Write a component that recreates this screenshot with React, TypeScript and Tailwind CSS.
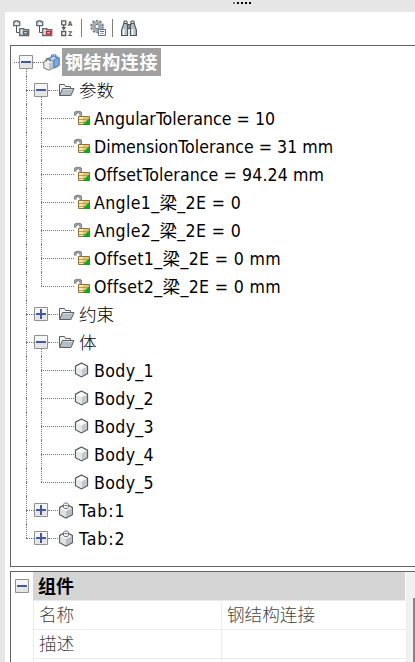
import type { ReactNode } from "react";
import clsx from "clsx";

type IconKind = "assembly" | "folder" | "param" | "body" | "tab";

interface TreeNode {
  label: string;
  icon: IconKind;
  textClass: string;
  open?: boolean;
  children?: TreeNode[];
}

const nodes: TreeNode[] = [
  {
    label: "参数",
    icon: "folder",
    textClass: "font-light",
    open: true,
    children: [
      { label: "AngularTolerance = 10", icon: "param", textClass: "tracking-[0.05px]" },
      { label: "DimensionTolerance = 31 mm", icon: "param", textClass: "tracking-[0.02px]" },
      { label: "OffsetTolerance = 94.24 mm", icon: "param", textClass: "tracking-[0.1px]" },
      { label: "Angle1_梁_2E = 0", icon: "param", textClass: "tracking-[0.34px]" },
      { label: "Angle2_梁_2E = 0", icon: "param", textClass: "tracking-[0.34px]" },
      { label: "Offset1_梁_2E = 0 mm", icon: "param", textClass: "tracking-[0.34px]" },
      { label: "Offset2_梁_2E = 0 mm", icon: "param", textClass: "tracking-[0.34px]" },
    ],
  },
  { label: "约束", icon: "folder", textClass: "font-light" },
  {
    label: "体",
    icon: "folder",
    textClass: "font-light",
    open: true,
    children: [
      { label: "Body_1", icon: "body", textClass: "tracking-[0.35px]" },
      { label: "Body_2", icon: "body", textClass: "tracking-[0.35px]" },
      { label: "Body_3", icon: "body", textClass: "tracking-[0.35px]" },
      { label: "Body_4", icon: "body", textClass: "tracking-[0.35px]" },
      { label: "Body_5", icon: "body", textClass: "tracking-[0.35px]" },
    ],
  },
  { label: "Tab:1", icon: "tab", textClass: "tracking-[0.9px]" },
  { label: "Tab:2", icon: "tab", textClass: "tracking-[0.9px]" },
];

function AssemblyIcon() {
  return (
    <svg width="17" height="17" viewBox="0 0 17 17" className="shrink-0">
      <path d="M6 4 10.500 2 16 3.500v8L11 14l-5-2z" fill="#b9d3f5" stroke="#4a7cc4" />
      <path d="M11 6 16 3.500v8L11 14z" fill="#7ea8e2" stroke="#4a7cc4" />
      <path d="M8.500 3.500V1.500c1-1 4-1 4.500 0V4" fill="none" stroke="#4a7cc4" strokeWidth="1.200" />
      <path d="M.8 7.500 5 5.500l5.500 1.800v6.700L6 16.200.8 14z" fill="#eceeef" stroke="#73797d" />
      <path d="M6 9.500v6.500l4.300-2.200V7.500z" fill="#bfc4c7" />
      <path d="M3.300 7.500V5.300c.5-1.300 3.200-1.300 3.700 0v2" fill="none" stroke="#73797d" strokeWidth="1.200" />
    </svg>
  );
}

function FolderIcon() {
  return (
    <svg width="17" height="14" viewBox="0 0 17 14" className="shrink-0">
      <path d="M1.500 12V1.500h5l1 2h5V6" fill="#f2f4f5" stroke="#596066" />
      <path d="m1.500 12.500 3-7H16l-3 7z" fill="#b5bec4" stroke="#596066" />
      <path d="M5 6.500h9.500" stroke="#d5dbdf" />
    </svg>
  );
}

function ParamIcon() {
  return (
    <svg width="16" height="16" viewBox="0 0 16 16" className="shrink-0">
      <path d="M1.300 5.500V3.800C1.300 1.300 6.800 1.300 6.800 3.800V6.500" fill="none" stroke="#62676c" strokeWidth="2.400" />
      <path d="M1.300 4.800V3.800C1.300 1.300 6.800 1.300 6.800 3.800V6" fill="none" stroke="#d8dadd" strokeWidth=".8" />
      <path d="M4.500 6.500h11v8h-11z" fill="#e5c477" stroke="#94733a" />
      <path d="M5 7h4v7H5z" fill="#fbe9b4" />
      <path d="M5 9.500h10M5 12.500h10" stroke="#c09a4a" />
      <path d="M16 7.500V15H8.500z" fill="#0cab18" />
    </svg>
  );
}

function BodyIcon() {
  return (
    <svg width="16" height="16" viewBox="0 0 16 16" className="shrink-0">
      <path d="m7.500 1 6 3.200v7.300l-6 3.300-6-3.300V4.200z" fill="#fafafa" stroke="#555b5f" strokeWidth="1.300" />
      <path d="M7.500 7.500 13 4.600v6.600l-5.500 3z" fill="#c4c8cb" />
      <path d="M7.500 7.500 2 4.600v6.600l5.500 3z" fill="#e5e7e8" />
    </svg>
  );
}

function TabIcon() {
  return (
    <svg width="16" height="17" viewBox="0 0 16 17" className="shrink-0">
      <path d="m8 2 6.300 3.500v7L8 16l-6.300-3.500v-7z" fill="#f7f7f7" stroke="#555b5f" strokeWidth="1.300" />
      <path d="m8 9 5.700-3v6.200L8 15.300z" fill="#b9c0c3" />
      <path d="M8 9 2.300 6v6.200L8 15.300z" fill="#dfe2e3" />
      <path d="M5.500 2.500c0-2 5-2 5 0v3c0 1.500-5 1.500-5 0z" fill="#eceeef" stroke="#6d7377" />
      <path d="M6.500 3.500h3" stroke="#6d7377" />
    </svg>
  );
}

const icons: Record<IconKind, ReactNode> = {
  assembly: <AssemblyIcon />,
  folder: <FolderIcon />,
  param: <ParamIcon />,
  body: <BodyIcon />,
  tab: <TabIcon />,
};

function Expander({ open }: { open?: boolean }) {
  return (
    <svg width="14" height="14" viewBox="0 0 14 14" className="block shrink-0">
      <path d="M.5.5h13v13H.5z" fill="#f5f5f5" stroke="#919191" />
      <path d="M1 8h12v5H1z" fill="#e5e5e5" />
      <path d="M2 6h10v2H2z" fill="#4059a5" />
      {!open && <path d="M6 2h2v10H6z" fill="#4059a5" />}
    </svg>
  );
}

// Dotted guide: a vertical line plus an optional branch to the right
function Guide({ className, last, branch }: { className: string; last?: boolean; branch?: boolean }) {
  return (
    <div className={clsx("flex h-7 shrink-0 flex-col border-[#777]", className)}>
      <div className="h-[14px] border-l border-dotted border-inherit" />
      <div
        className={clsx(
          "h-[14px] border-dotted border-inherit",
          !last && "border-l",
          branch && "border-t"
        )}
      />
    </div>
  );
}

function Dash({ className }: { className: string }) {
  return <div className={clsx("mt-[14px] h-0 shrink-0 border-t border-dotted border-[#777]", className)} />;
}

function ExpanderCell({ open }: { open?: boolean }) {
  return (
    <div className="flex h-7 w-[14px] shrink-0 flex-col pt-[7px]">
      <Expander open={open} />
      {open && <div className="ml-[7px] h-[7px] border-l border-dotted border-[#777]" />}
    </div>
  );
}

function Label({ node }: { node: TreeNode }) {
  return <span className={clsx("h-7 whitespace-pre pt-px", node.textClass)}>{node.label}</span>;
}

function Leaf({ node, last }: { node: TreeNode; last: boolean }) {
  return (
    <div className="flex h-7 pl-[15px]">
      <Guide className="w-[15px]" />
      <Guide className="w-[33px]" last={last} branch />
      <div className="flex items-center gap-1">
        {icons[node.icon]}
        <Label node={node} />
      </div>
    </div>
  );
}

function Branch({ node, last }: { node: TreeNode; last: boolean }) {
  const children = node.children ?? [];
  return (
    <>
      <div className="flex h-7 pl-[15px]">
        <Guide className="w-2" last={last} branch />
        <ExpanderCell open={node.open} />
        <Dash className="w-[10px]" />
        <div className="flex items-center">
          <div className="w-[21px]">{icons[node.icon]}</div>
          <Label node={node} />
        </div>
      </div>
      {children.map((child, i) => (
        <Leaf key={child.label} node={child} last={i === children.length - 1} />
      ))}
    </>
  );
}

function TreeFolders({ color }: { color: string }) {
  return (
    <svg width="17" height="17" viewBox="0 0 17 17">
      <path d="M3.500 6v6.500H6" fill="none" stroke="#4e5559" />
      <path d="M.7 5.700V1.800h1.300v-1h3v1h1.700v3.900z" fill="#e9eff1" stroke="#5f686d" strokeWidth="1.300" />
      <path d="M6.700 15.500V8.700h4v1h5v5.800z" fill="#dbe4e7" stroke="#5f686d" strokeWidth="1.300" />
      <path d="M10.500 11.500h4v2.500h-4z" fill="#fff" stroke={color} strokeWidth="1.400" />
    </svg>
  );
}

function SortIcon() {
  return (
    <svg width="13" height="17" viewBox="0 0 13 17">
      <path d="M.7.800h4v4h-4zM.7 11.500h4v4h-4z" fill="#f7f7f7" stroke="#555d62" strokeWidth="1.300" />
      <path d="M2.700 5v5" stroke="#555d62" strokeWidth="1.200" />
      <path d="M.3 7h4.800L2.700 10.300z" fill="#555d62" />
      <text x="6.800" y="5.500" fontSize="6.500" fontWeight="700" fill="#4f575b">A</text>
      <text x="7" y="16" fontSize="6.500" fontWeight="700" fill="#4f575b">Z</text>
    </svg>
  );
}

function SettingsIcon() {
  return (
    <svg width="17" height="17" viewBox="0 0 17 17">
      <circle cx="7" cy="6.500" r="5.900" fill="none" stroke="#70787d" strokeWidth="1.800" strokeDasharray="2.330 1.370" />
      <circle cx="7" cy="6.500" r="3.900" fill="none" stroke="#a3abb0" strokeWidth="3" />
      <circle cx="7" cy="6.500" r="2.100" fill="#fff" stroke="#6b7378" />
      <path d="M8.500 9.500h7v6h-7z" fill="#fff" stroke="#687075" />
      <path d="M10 11.500h4" stroke="#2c7be0" />
      <path d="M10 13.500h4" stroke="#86aeda" />
    </svg>
  );
}

function FindIcon() {
  return (
    <svg width="16" height="17" viewBox="0 0 16 17">
      <path d="M5.500 4.500h5v4h-5z" fill="#8b979d" stroke="#4c5459" />
      <path d="M.6 15.500V10L3 3h3l.6 4v8.500zM15.400 15.500V10L13 3h-3l-.6 4v8.500z" fill="#b4c1c7" stroke="#4c5459" strokeWidth="1.100" />
      <path d="M3 1h3v2.500H3zM10 1h3v2.500h-3z" fill="#e8eef0" stroke="#4c5459" />
      <path d="M2.700 9v6M11.500 9v6" stroke="#f4f8fa" strokeWidth="1.800" />
    </svg>
  );
}

function Toolbar() {
  return (
    <div className="flex h-[33px] shrink-0 pl-2 pt-2">
      <TreeFolders color="#586166" />
      <div className="ml-[6px]">
        <TreeFolders color="#d4202a" />
      </div>
      <div className="ml-[8px]">
        <SortIcon />
      </div>
      <div className="ml-[7px] -mt-px h-[18px] w-px bg-[#808080]" />
      <div className="ml-[8px]">
        <SettingsIcon />
      </div>
      <div className="ml-[5px] -mt-px h-[18px] w-px bg-[#808080]" />
      <div className="ml-[8px]">
        <FindIcon />
      </div>
    </div>
  );
}

function PropertyRow({ name, value }: { name: string; value?: string }) {
  return (
    <div className="flex h-[29px] shrink-0 border-b border-[#ebebeb] font-light text-[#444]">
      <div className="flex w-[188px] items-center border-l border-[#ebebeb] pl-[5px]">{name}</div>
      <div className="flex flex-1 items-center border-l border-[#ebebeb] pl-[5px]">{value}</div>
    </div>
  );
}

export default function App() {
  return (
    <div className="flex h-[662px] w-[415px] flex-col overflow-hidden bg-[#e6e6e6] pl-[5px] font-['DejaVu_Sans_Condensed','Noto_Sans_CJK_SC',sans-serif] text-[17.600px] leading-7 text-black">
      <div className="flex h-3 shrink-0 gap-[2px] pl-[228px] pt-[2px]">
        <i className="h-[2px] w-[2px] bg-[#777]" />
        <i className="h-[2px] w-[2px] bg-black" />
        <i className="h-[2px] w-[2px] bg-black" />
        <i className="h-[2px] w-[2px] bg-black" />
        <i className="h-[2px] w-[2px] bg-black" />
      </div>

      <div className="flex flex-1 flex-col bg-white">
        <Toolbar />

        <div className="ml-[5px] h-[522px] shrink-0 border-y border-l border-[#636363] pt-[2px]">
          <div className="flex h-7 pl-[3px]">
            <Dash className="w-[5px]" />
            <ExpanderCell open />
            <Dash className="w-[10px]" />
            <div className="flex items-center">
              <div className="w-[19px]">{icons.assembly}</div>
              <span className="h-7 w-[99px] bg-[#a0a0a0] pl-[3px] pt-px text-[18px] font-bold tracking-[0.600px] text-white">
                钢结构连接
              </span>
            </div>
          </div>
          {nodes.map((node, i) => (
            <Branch key={node.label} node={node} last={i === nodes.length - 1} />
          ))}
        </div>

        <div className="ml-[5px] mt-1 flex flex-1 overflow-hidden border-l border-t border-[#636363]">
          <div className="w-[22px] shrink-0 pl-1 pt-[7px]">
            <Expander open />
          </div>
          <div className="flex w-[372px] shrink-0 flex-col">
            <div className="h-[29px] shrink-0 border-b border-[#ebebeb] bg-[#d5d5d5] pl-[5px] pt-px text-[18px] font-bold">
              组件
            </div>
            <PropertyRow name="名称" value="钢结构连接" />
            <PropertyRow name="描述" />
            <PropertyRow name="" />
          </div>
          <div className="ml-px flex-1 bg-[#f0f0f0] pl-[7px] pt-[26px]">
            <div className="h-full bg-[#858585]" />
          </div>
        </div>
      </div>
    </div>
  );
}
